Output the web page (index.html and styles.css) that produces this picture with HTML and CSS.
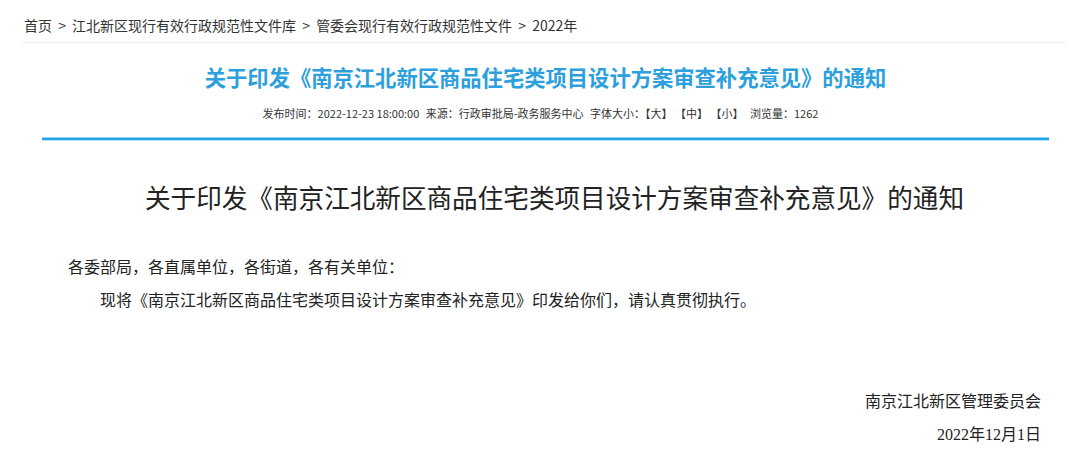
FILE: index.html
```html
<!DOCTYPE html>
<html lang="zh-CN">
<head>
<meta charset="utf-8">
<title>关于印发《南京江北新区商品住宅类项目设计方案审查补充意见》的通知</title>
<link rel="stylesheet" href="styles.css">
</head>
<body>
<div class="page">
  <div class="crumb">
    <a href="#">首页</a> <span class="sep">&gt;</span> <a href="#">江北新区现行有效行政规范性文件库</a> <span class="sep">&gt;</span> <a href="#">管委会现行有效行政规范性文件</a> <span class="sep">&gt;</span> <a href="#">2022年</a>
  </div>
  <div class="article">
    <h1 class="headline">关于印发《南京江北新区商品住宅类项目设计方案审查补充意见》的通知</h1>
    <div class="meta">
      <span>发布时间：2022-12-23 18:00:00</span>
      <span>来源：行政审批局-政务服务中心</span>
      <span>字体大小：【大】 【中】 【小】</span>
      <span>浏览量：1262</span>
    </div>
    <div class="rule"></div>
    <div class="content">
      <h2 class="doc-title">关于印发《南京江北新区商品住宅类项目设计方案审查补充意见》的通知</h2>
      <p class="salute">各委部局，各直属单位，各街道，各有关单位：</p>
      <p class="indent">现将《南京江北新区商品住宅类项目设计方案审查补充意见》印发给你们，请认真贯彻执行。</p>
      <p class="sign">南京江北新区管理委员会</p>
      <p class="date">2022年12月1日</p>
    </div>
  </div>
</div>
</body>
</html>
```
FILE: styles.css
```css
html, body {
  margin: 0;
  padding: 0;
  background: #ffffff;
}
body {
  font-family: "Noto Sans CJK SC", "Noto Sans", sans-serif;
  color: #333;
}
.page {
  width: 1046px;
  margin-left: 21px;
}
.crumb {
  height: 42px;
  line-height: 50px;
  padding-left: 3px;
  font-size: 14px;
  color: #333;
  border-bottom: 1px solid #eeeeee;
  white-space: nowrap;
}
.crumb a {
  color: #333;
  text-decoration: none;
}
.crumb .sep {
  margin: 0 3px;
}
.article {
  margin-left: 21px;
  width: 1007px;
}
.headline {
  margin: 20px 0 0;
  text-align: center;
  font-size: 21.3px;
  line-height: 28px;
  font-weight: bold;
  color: #2c9fdc;
}
.meta {
  margin-top: 14px;
  padding-right: 10px;
  text-align: center;
  font-size: 11px;
  line-height: 16px;
  color: #333;
}
.meta span {
  margin: 0 2px;
}
.rule {
  margin-top: 16px;
  height: 2px;
  background: #1ea7e4;
  border-top: 1px solid #8fd2f1;
  border-bottom: 1px solid #b9e3f6;
}
.content {
  padding: 0 8px 0 26px;
}
.doc-title {
  margin: 38px 0 0;
  text-align: center;
  font-size: 25.6px;
  line-height: 36px;
  font-weight: normal;
  color: #222;
}
.content p {
  margin: 0;
  font-size: 16px;
  line-height: 33px;
  color: #222;
}
.salute {
  margin-top: 35px !important;
}
.indent {
  text-indent: 2em;
}
.sign {
  margin-top: 68px !important;
  text-align: right;
}
.date {
  margin-top: 1px !important;
  text-align: right;
  font-family: "Liberation Serif", "Noto Sans CJK SC", serif;
}
```
